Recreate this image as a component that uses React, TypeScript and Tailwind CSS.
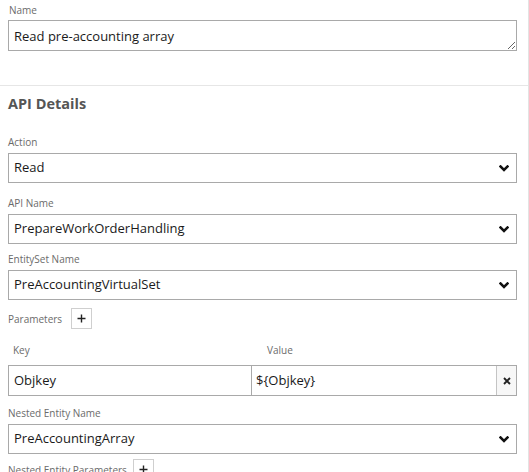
import React from 'react';

const font = { fontFamily: '"Open Sans", "Liberation Sans", sans-serif' };

function Chevron() {
  return (
    <svg width="10" height="7" viewBox="0 0 10 7" className="shrink-0">
      <path d="M1.5 1.5 L5 5 L8.5 1.5" fill="none" stroke="#111" strokeWidth="2.5" strokeLinecap="square" />
    </svg>
  );
}

function PlusButton() {
  return (
    <button className="w-[21px] h-[21px] border border-[#cfcfcf] bg-white flex items-center justify-center">
      <svg width="9" height="9" viewBox="0 0 9 9">
        <path d="M4.5 0.5 V8.5 M0.5 4.5 H8.5" stroke="#222" strokeWidth="1.4" />
      </svg>
    </button>
  );
}

function Label({ children, className = '' }: { children: React.ReactNode; className?: string }) {
  return <div className={`text-[10px] leading-[16px] text-[#6b6b6b] ${className}`}>{children}</div>;
}

function Select({ value, className = '' }: { value: string; className?: string }) {
  return (
    <div className={`h-[30px] border border-[#a9a9a9] bg-white flex items-center justify-between pl-[5px] pr-[7px] ${className}`}>
      <span className="text-[13px] text-[#1a1a1a]">{value}</span>
      <Chevron />
    </div>
  );
}

export default function App() {
  return (
    <div className="w-[529px] h-[472px] overflow-hidden bg-white border-r border-[#e3e3e3]" style={font}>
      {/* Name */}
      <div className="pl-2 pr-[11px]">
        <div className="text-[10px] leading-[20px] text-[#6b6b6b] pl-px">Name</div>
        <textarea
          defaultValue="Read pre-accounting array"
          className="block w-full h-[31px] border border-[#a9a9a9] px-[5px] pt-[5px] pb-[3px] text-[13px] leading-[20px] text-[#1a1a1a] outline-none overflow-hidden"
          style={font}
        />
      </div>

      {/* API Details */}
      <div className="mt-[34px] border-t border-[#e6e6e6] pl-2 pr-[11px] pt-[8px]">
        <div className="text-[14.5px] leading-[20px] font-bold text-[#555]">API Details</div>

        <Label className="mt-[20px]">Action</Label>
        <Select value="Read" className="mt-[3px]" />

        <Label className="mt-[12px]">API Name</Label>
        <Select value="PrepareWorkOrderHandling" className="mt-[3px]" />

        <Label className="mt-[7px]">EntitySet Name</Label>
        <Select value="PreAccountingVirtualSet" className="mt-[3px]" />

        <div className="mt-[8px] flex items-center gap-[9px] h-[21px]">
          <Label>Parameters</Label>
          <PlusButton />
        </div>

        <div className="mt-[13px] grid grid-cols-[243px_245px_1fr] text-[10px] leading-[16px] text-[#6b6b6b]">
          <div className="pl-[5px]">Key</div>
          <div className="pl-[16px]">Value</div>
          <div />
        </div>

        <div className="mt-[7px] grid grid-cols-[243px_245px_1fr] h-[31px] border border-[#a9a9a9]">
          <div className="flex items-center pl-[5px] text-[13px] text-[#1a1a1a] border-r border-[#a9a9a9]">Objkey</div>
          <div className="flex items-center pl-[4px] text-[13px] text-[#1a1a1a] border-r border-[#c4c4c4]">${'{'}Objkey{'}'}</div>
          <div className="flex items-center justify-center bg-[#f7f7f7]">
            <svg width="8" height="8" viewBox="0 0 8 8">
              <path d="M1 1 L7 7 M7 1 L1 7" stroke="#222" strokeWidth="1.9" />
            </svg>
          </div>
        </div>

        <Label className="mt-[9px]">Nested Entity Name</Label>
        <Select value="PreAccountingArray" className="mt-[3px]" />

        <div className="mt-[5px] flex items-center gap-[6px] h-[21px]">
          <Label>Nested Entity Parameters</Label>
          <PlusButton />
        </div>
      </div>
    </div>
  );
}
